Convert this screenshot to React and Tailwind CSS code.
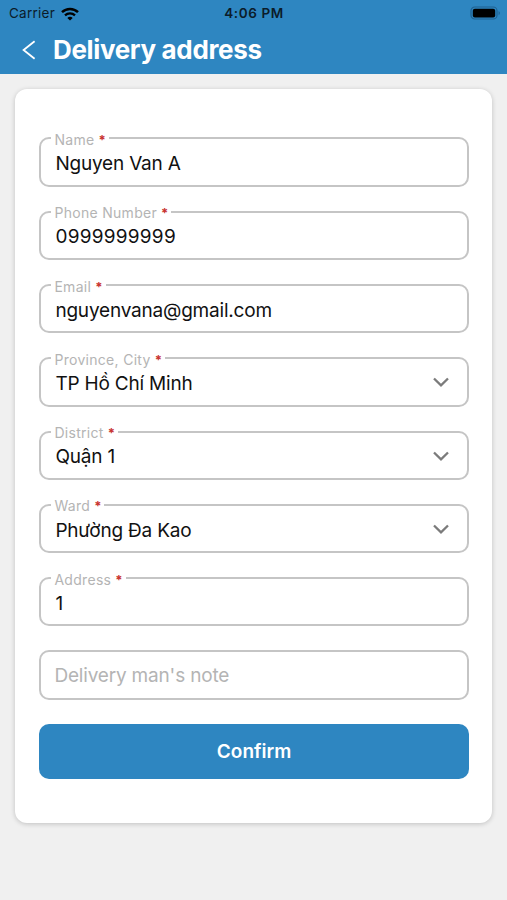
import React from "react";

const fields = [
    { label: "Name", value: "Nguyen Van A" },
    { label: "Phone Number", value: "0999999999", numeric: true },
    { label: "Email", value: "nguyenvana@gmail.com" },
    { label: "Province, City", value: "TP Hồ Chí Minh", select: true },
    { label: "District", value: "Quận 1", select: true },
    { label: "Ward", value: "Phường Đa Kao", select: true },
    { label: "Address", value: "1" }
];

const StatusBar = () => (
    <div className="flex h-[27px] items-center justify-between pl-[9px] pr-[6px] text-[13.5px] text-[#0b1c2a]">
        <div className="flex w-[120px] items-center gap-[6px]">
            <span className="tracking-[0.25px]">Carrier</span>
            <svg className="h-[14px] w-[18px]" viewBox="0 0 18 14" fill="none">
                <path d="M1 5.2a11.6 11.6 0 0 1 16 0" stroke="#000" strokeWidth="2.5" />
                <path d="M4 8.4a7.3 7.3 0 0 1 10 0" stroke="#000" strokeWidth="2.3" />
                <path d="M6.3 10.9a4 4 0 0 1 5.4 0L9 13.6z" fill="#000" />
            </svg>
        </div>
        <span className="pr-[2px] text-[13.5px] font-semibold tracking-[0.6px]">4:06 PM</span>
        <div className="flex w-[120px] justify-end">
            <svg className="h-[15px] w-[31px]" viewBox="0 0 31 15" fill="none">
                <rect x="1" y="1" width="26" height="12" rx="3.8" stroke="#1f6191" strokeWidth="1.2" />
                <rect x="2.8" y="2.8" width="22.4" height="8.6" rx="2" fill="#000" />
                <path d="M28.6 5c1.7.8 1.7 3.4 0 4.2z" fill="#1f6191" />
            </svg>
        </div>
    </div>
);

const Field = ({ label, value, select, numeric }) => (
    <div className="relative flex h-[49.3px] items-center justify-between rounded-[10px] border-2 border-[#c5c5c5] pl-[14px] pr-[18px]">
        <span className="absolute -top-[8.4px] left-[10px] flex bg-white px-[3px] text-[14px] leading-[18px] tracking-[0.3px] text-[#b4b4b4]">
            {label}
            <span className="ml-[4px] text-[13px] font-bold leading-[18px] tracking-normal text-[#c8322f]">*</span>
        </span>
        <span className={`pt-[4px] text-[19px] leading-6 text-[#111111] ${numeric ? "tracking-[0.25px]" : "tracking-[-0.2px]"}`}>
            {value}
        </span>
        {select && (
            <svg className="mt-[1px] h-[10px] w-[16px]" viewBox="0 0 16 10" fill="none">
                <path d="M1 1.5 8 8.3l7-6.8" stroke="#7b7b7b" strokeWidth="2.3" />
            </svg>
        )}
    </div>
);

const App = () => {
    return (
        <div className="h-[900px] w-[507px] overflow-hidden bg-[#f0f0f0] font-['Inter',sans-serif]">
            {/* Header */}
            <header className="h-[74px] bg-[#2e86c1]">
                <StatusBar />
                <div className="flex h-[45px] items-center pl-[22px]">
                    <svg className="h-[20px] w-[14px]" viewBox="0 0 14 20" fill="none">
                        <path d="M12.6 1.2 1.6 10l11 8.8" stroke="#fff" strokeWidth="1.8" />
                    </svg>
                    <h1 className="-mt-[1px] ml-[17px] text-[26px] font-bold tracking-[-0.35px] text-white">Delivery address</h1>
                </div>
            </header>

            {/* Form card */}
            <main className="ml-[15.4px] mr-[14.6px] mt-[15px] h-[734px] rounded-[12px] bg-white pl-[24px] pr-[23.6px] pt-[48.4px] shadow-[0_1px_5px_rgba(0,0,0,0.2)]">
                <div className="flex flex-col gap-[24px]">
                    {fields.map((field) => (
                        <Field key={field.label} {...field} />
                    ))}
                    <div className="flex h-[49.3px] items-center rounded-[10px] border-2 border-[#c5c5c5] pl-[13px] pt-[2px] text-[19px] tracking-[-0.18px] text-[#b4b4b4]">
                        Delivery man's note
                    </div>
                    <button className="h-[55px] rounded-[10px] bg-[#2e86c1] pt-[2px] text-[19px] font-semibold text-white">
                        Confirm
                    </button>
                </div>
            </main>
        </div>
    );
};

export default App;
